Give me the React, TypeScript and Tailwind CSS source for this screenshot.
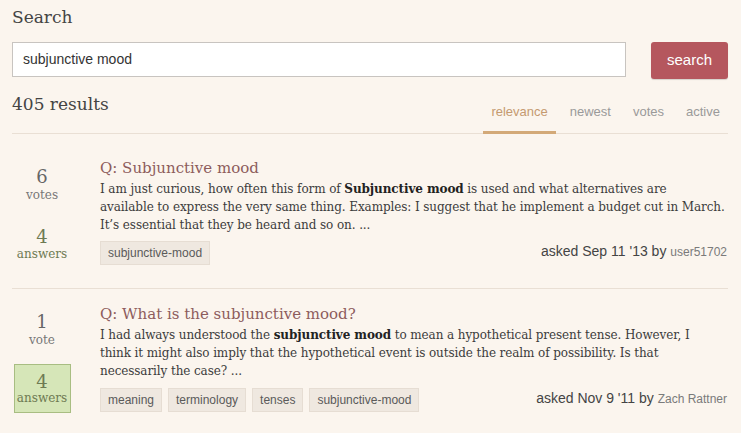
import React from "react";

function Tag({ children }: { children: React.ReactNode }) {
  return (
    <span className="inline-block h-[24px] leading-[22px] px-[7px] bg-[#efe8e0] border border-[#e6ddd3] text-[12px] text-[#5a5a5a] font-['Liberation_Sans',Arial,sans-serif]">
      {children}
    </span>
  );
}

export default function App() {
  return (
    <div className="w-[741px] h-[433px] overflow-hidden bg-[#fbf5ee] text-[#333] font-['DejaVu_Serif',Georgia,serif]">
      <div className="pl-[12px] pr-[13px]">
        <div className="pt-[6px] h-[42px] text-[17px] text-[#444] leading-[22px]">Search</div>
        <div className="flex items-start gap-[25px]">
          <div className="flex-1 h-[35px] bg-white border border-[#c8c4c0] flex items-center pl-[10px] text-[14px] text-[#333] font-['Liberation_Sans',Arial,sans-serif]">
            subjunctive mood
          </div>
          <button className="w-[77px] h-[37px] rounded-[3px] bg-[#b5575e] text-white text-[15px] font-['Liberation_Sans',Arial,sans-serif] shadow-[0_1px_1px_rgba(0,0,0,0.15)]">
            search
          </button>
        </div>
        <div className="flex items-end justify-between h-[55px] border-b border-[#e9dfd4]">
          <div className="text-[17px] text-[#444] pb-[16px]">405 results</div>
          <div className="flex items-end gap-[6px] text-[13px] font-['Liberation_Sans',Arial,sans-serif] -mb-[1px]">
            <div className="px-[8px] pb-[10px] border-b-[3px] border-[#d3a978] text-[#c59a70]">relevance</div>
            <div className="px-[8px] pb-[10px] border-b-[3px] border-transparent text-[#9a9a9a]">newest</div>
            <div className="px-[8px] pb-[10px] border-b-[3px] border-transparent text-[#9a9a9a]">votes</div>
            <div className="px-[8px] pb-[10px] border-b-[3px] border-transparent text-[#9a9a9a]">active</div>
          </div>
        </div>

        {/* result 1 */}
        <div className="flex border-b border-[#e9dfd4] h-[155px] pt-[24px]">
          <div className="w-[60px] shrink-0 flex flex-col items-center">
            <div className="text-[18px] text-[#666] leading-[22px] mt-[8px]">6</div>
            <div className="text-[12px] text-[#777] leading-[14px]">votes</div>
            <div className="mt-[25px] text-[18px] text-[#6e7a53] leading-[20px]">4</div>
            <div className="text-[12px] text-[#6e7a53] leading-[14px]">answers</div>
          </div>
          <div className="flex-1 min-w-0 ml-[28px]">
            <div className="text-[15px] text-[#8d5c5c] leading-[20px]">Q: Subjunctive mood</div>
            <div className="text-[12px] tracking-[-0.1px] text-[#3c3c3c] leading-[18px] mt-[2px] whitespace-nowrap">
              <div>I am just curious, how often this form of <b className="text-[#222]">Subjunctive mood</b> is used and what alternatives are</div>
              <div>available to express the very same thing. Examples: I suggest that he implement a budget cut in March.</div>
              <div>It’s essential that they be heard and so on. ...</div>
            </div>
            <div className="flex items-start justify-between mt-[7px]">
              <div className="flex gap-[6px]"><Tag>subjunctive-mood</Tag></div>
              <div className="font-['Liberation_Sans',Arial,sans-serif] text-[14px] text-[#444] pr-[1px]">
                asked Sep 11 '13 by <span className="text-[12px] text-[#7a7a7a]">user51702</span>
              </div>
            </div>
          </div>
        </div>

        {/* result 2 */}
        <div className="flex pt-[15px]">
          <div className="w-[60px] shrink-0 flex flex-col items-center">
            <div className="text-[18px] text-[#666] leading-[22px] mt-[7px]">1</div>
            <div className="text-[12px] text-[#777] leading-[14px]">vote</div>
            <div className="mt-[17px] w-[57px] h-[49px] bg-[#d6e6b8] border border-[#a8bd82] flex flex-col items-center justify-center">
              <div className="text-[18px] text-[#6e7a53] leading-[18px]">4</div>
              <div className="text-[12px] text-[#6e7a53] leading-[14px]">answers</div>
            </div>
          </div>
          <div className="flex-1 min-w-0 ml-[28px]">
            <div className="text-[15px] text-[#8d5c5c] leading-[20px]">Q: What is the subjunctive mood?</div>
            <div className="text-[12px] tracking-[-0.1px] text-[#3c3c3c] leading-[18px] mt-[2px] whitespace-nowrap">
              <div>I had always understood the <b className="text-[#222]">subjunctive mood</b> to mean a hypothetical present tense. However, I</div>
              <div>think it might also imply that the hypothetical event is outside the realm of possibility. Is that</div>
              <div>necessarily the case? ...</div>
            </div>
            <div className="flex items-start justify-between mt-[8px]">
              <div className="flex gap-[6px]">
                <Tag>meaning</Tag>
                <Tag>terminology</Tag>
                <Tag>tenses</Tag>
                <Tag>subjunctive-mood</Tag>
              </div>
              <div className="font-['Liberation_Sans',Arial,sans-serif] text-[14px] text-[#444] pr-[1px]">
                asked Nov 9 '11 by <span className="text-[12px] text-[#7a7a7a]">Zach Rattner</span>
              </div>
            </div>
          </div>
        </div>
      </div>
    </div>
  );
}
